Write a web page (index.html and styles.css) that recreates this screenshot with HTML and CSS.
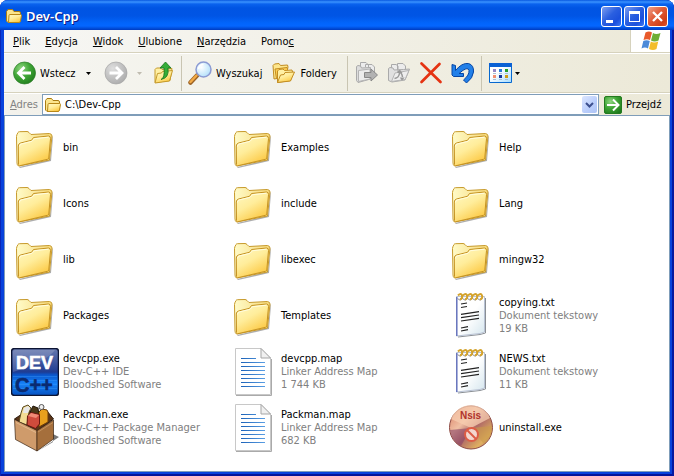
FILE: index.html
```html
<!DOCTYPE html>
<html lang="pl">
<head>
<meta charset="utf-8">
<title>Dev-Cpp</title>
<link rel="stylesheet" href="styles.css">
</head>
<body>
<svg class="defs" aria-hidden="true">
  <defs>
    <linearGradient id="gFolder" x1="0" y1="0" x2=".6" y2="1"><stop offset="0" stop-color="#fff9c4"/><stop offset=".5" stop-color="#ffed9b"/><stop offset="1" stop-color="#fcc944"/></linearGradient>
    <linearGradient id="gBack" x1="0" y1="0" x2="1" y2="0"><stop offset="0" stop-color="#fffbc8"/><stop offset="1" stop-color="#f6d878"/></linearGradient>
    <radialGradient id="gGreen" cx=".35" cy=".3" r=".8"><stop offset="0" stop-color="#8fd680"/><stop offset=".5" stop-color="#3ea535"/><stop offset="1" stop-color="#1f7a1c"/></radialGradient>
    <radialGradient id="gGray" cx=".35" cy=".3" r=".8"><stop offset="0" stop-color="#dedede"/><stop offset="1" stop-color="#a9a9a9"/></radialGradient>
    <linearGradient id="gDev" x1="0" y1="0" x2="0" y2="1"><stop offset="0" stop-color="#6678ae"/><stop offset=".5" stop-color="#1f3c92"/><stop offset=".56" stop-color="#0a56cc"/><stop offset=".75" stop-color="#1682f8"/><stop offset="1" stop-color="#0651c0"/></linearGradient>
    <linearGradient id="gLine"><stop offset="0" stop-color="#1c62b8"/><stop offset="1" stop-color="#5b9fe4"/></linearGradient>
    <linearGradient id="gPaper" x1="0" y1="0" x2="1" y2="1"><stop offset=".5" stop-color="#fff"/><stop offset="1" stop-color="#d5e6ee"/></linearGradient>
    <linearGradient id="gDisc" x1="0" y1="0" x2="1" y2="1"><stop offset="0" stop-color="#d9795f"/><stop offset=".35" stop-color="#f0c0a4"/><stop offset=".55" stop-color="#b06a66"/><stop offset=".8" stop-color="#e0b060"/><stop offset="1" stop-color="#9d5c78"/></linearGradient>
    <radialGradient id="gLens" cx=".35" cy=".35" r=".8"><stop offset="0" stop-color="#fff"/><stop offset="1" stop-color="#a8dcfa"/></radialGradient>
    <linearGradient id="gView" x1="0" y1="0" x2="1" y2="1"><stop offset=".4" stop-color="#fff"/><stop offset="1" stop-color="#a5dcff"/></linearGradient>

    <symbol id="folder" viewBox="0 0 48 48">
      <path d="M8 43 L39 35.500 L41.500 12 L42 13 L40 37 L9 44Z" fill="#777" opacity=".6"/>
      <path d="M5.500 12.500 Q5.500 11 7 8.500 Q7.500 7.700 8.500 7.700 L16 7.500 Q17 7.500 18 8.500 L20 10.500 L38.500 9.500 Q41 10 41 12 L38.500 36 L7.500 42 Q6 41 6 39Z" fill="url(#gBack)" stroke="#c79a2c"/>
      <path d="M7.300 22 Q7.300 19.700 9.500 19 L20.500 16.300 L22.500 13.500 L37.500 12 Q39.500 12 39.500 14.500 L37.800 34 Q37.500 35 36.500 35.300 L8.500 41.800 Q7.500 42 7.500 40.500Z" fill="url(#gFolder)" stroke="#c59221"/>
      <path d="M8.500 22.500 Q8.500 20.500 10 20 L21 17.300 L23.500 14.700 L37.500 13.200" fill="none" stroke="#fffde0"/>
    </symbol>
    <symbol id="folder-small" viewBox="0 0 16 16">
      <path d="M.5 13 V3.500 L2 1.500 H6.500 L8 3.500 H13 Q14.500 3.500 14.500 5 V12 L13 14.500 H2Z" fill="#fbe58e" stroke="#a97c12"/>
      <path d="M2.500 14.500 L3 7.500 Q3 6.500 4 6.500 H14.500 Q15.500 6.500 15.500 7.500 L14.500 13 Q14.200 14.500 13 14.500Z" fill="url(#gFolder)" stroke="#b88718"/>
    </symbol>
    <symbol id="map" viewBox="0 0 48 48">
      <path d="M7 47.500H42.500V11" fill="none" stroke="#aaa"/>
      <path d="M6.500 .5H32L41.500 10V46.500H6.500Z" fill="#fff" stroke="#c8c8c8"/>
      <path d="M32 .5V10H41.500Z" fill="#f0f0f0" stroke="#a5a5a5"/>
      <path d="M12 10h15v1H12zM12 14h24v1H12zM12 18h24v1H12zM12 22h24v1H12zM12 26h24v1H12zM12 30h24v1H12zM12 34h24v1H12zM12 38h24v1H12z" fill="url(#gLine)"/>
    </symbol>
    <symbol id="txt" viewBox="0 0 48 48">
      <path d="M11 45 L33 42.500 L38.500 41 V6" fill="none" stroke="#8a8f94"/>
      <path d="M9.500 4.500 H37.500 V40 L33 41.500 L9.500 44Z" fill="url(#gPaper)" stroke="#b8c2d4"/>
      <path d="M9.800 5 V44" stroke="#6674bd" stroke-width="1.500"/>
      <path d="M14 12l6-1M14 15.500l6-1M14 22.300l18-2.600M14 25.700l18-2.700M14 29l18-2.700M14 36l7-1.300M14 39l7-1.300" stroke="#222" stroke-width="1.200"/>
      <path d="M11 3.500q3-3 4 0t-2 4M16 3.500q3-3 4 0t-2 4M21 3.500q3-3 4 0t-2 4M26 3.500q3-3 4 0t-2 4M31 3.500q3-3 4 0t-2 4" fill="none" stroke="#d3a22c" stroke-width="2"/>
      <path d="M11 6.500l2 2M16 6.500l2 2M21 6.500l2 2M26 6.500l2 2M31 6.500l2 2" stroke="#666"/>
    </symbol>
  </defs>
</svg>

<main class="window">
  <header class="titlebar">
    <svg class="i16" viewBox="0 0 16 16"><use href="#folder-small"/></svg>
    <h1>Dev-Cpp</h1>
    <div class="controls">
      <button class="ctl" aria-label="Minimalizuj"><svg viewBox="0 0 19 19"><path d="M4 13h7v3H4z" fill="#fff"/></svg></button>
      <button class="ctl" aria-label="Maksymalizuj"><svg viewBox="0 0 19 19"><path d="M4 4h11v11H4zM5 7v7h9V7z" fill="#fff" fill-rule="evenodd"/></svg></button>
      <button class="ctl close" aria-label="Zamknij"><svg viewBox="0 0 19 19"><path d="M5 5l9 9M14 5l-9 9" stroke="#fff" stroke-width="2.300"/></svg></button>
    </div>
  </header>

  <div class="menurow">
    <nav class="menu">
      <button><u>P</u>lik</button><button><u>E</u>dycja</button><button><u>W</u>idok</button><button><u>U</u>lubione</button><button><u>N</u>arzędzia</button><button>Pomo<u>c</u></button>
    </nav>
    <div class="flag">
      <svg viewBox="0 0 20 20">
        <path d="M4.500 1.500 Q8-.5 11 1.500 L9 9 Q6 7.500 2.500 9Z" fill="#e8592b"/>
        <path d="M12 2 Q15 4 19.500 2 L17.500 9.500 Q13.500 11.500 10 9.500Z" fill="#6fae34"/>
        <path d="M2.300 10 Q5.500 8.500 8.800 10 L7 17.500 Q4 15.500 .5 17.500Z" fill="#4c8ad8"/>
        <path d="M9.800 10.500 Q13 12.500 17.200 10.500 L15.500 18 Q12 20 8 18Z" fill="#f3bd2b"/>
      </svg>
    </div>
  </div>

  <div class="toolbar">
    <button class="tool back"><svg class="i24" viewBox="0 0 24 24"><circle cx="12.500" cy="12" r="11" fill="url(#gGreen)" stroke="#2d7d28" stroke-width=".7"/><path d="M19 12H7.500M12.500 6l-6 6 6 6" fill="none" stroke="#fff" stroke-width="2.800"/></svg>Wstecz</button>
    <button class="drop" aria-label="Historia wstecz"><svg viewBox="0 0 5 3"><path d="M0 0h5L2.500 3z"/></svg></button>
    <button class="tool fwd" aria-label="Dalej"><svg class="i24" viewBox="0 0 24 24"><circle cx="12" cy="12" r="11" fill="url(#gGray)" stroke="#a5a5a5" stroke-width=".7"/><path d="M5.500 12H17M12 6l6 6-6 6" fill="none" stroke="#fff" stroke-width="2.800"/></svg></button>
    <button class="drop off" aria-label="Historia dalej"><svg viewBox="0 0 5 3"><path d="M0 0h5L2.500 3z"/></svg></button>
    <button class="tool up" aria-label="Do góry"><svg class="i24" viewBox="0 0 24 24">
      <path d="M3 21.500 V8.500 L4.500 7 H8.500 L10 8.500 L20 7.500 L18 19.500Z" fill="#fff0a4" stroke="#c59a2c"/>
      <path d="M3 22 L5.500 12.500 L9.500 12 L10.500 10.500 L20.500 9.500 L17.500 20Z" fill="url(#gFolder)" stroke="#c59a2c"/>
      <path d="M9 18.500 Q13 17 12 7 H8 L13.500 1 L19 7 H16 Q17.500 17 9 18.500Z" fill="#35ad38" stroke="#16721c" stroke-width=".8"/></svg></button>
    <span class="sep"></span>
    <button class="tool search"><svg class="i24" viewBox="0 0 24 24"><path d="M9 14.500L2.500 21.500" stroke="#9b6224" stroke-width="4.500" stroke-linecap="round"/><path d="M8.500 14.500L2.500 21" stroke="#f3aa45" stroke-width="2.500" stroke-linecap="round"/><circle cx="15.500" cy="8.500" r="7.500" fill="url(#gLens)" stroke="#8c9bd3" stroke-width="1.500"/><path d="M10.500 8a5 5 0 0 1 5-4.500" fill="none" stroke="#fff" stroke-width="1.500"/></svg>Wyszukaj</button>
    <button class="tool folders"><svg class="i24" viewBox="0 0 24 24">
      <path d="M2 18 L1 4.500 L2.500 3 L7 2.500 L8.500 4.500 L15.500 4 L16 6 L14 16Z" fill="#fde68c" stroke="#c28d22"/>
      <path d="M4.500 18 L3 8 L15 6.500 L15.500 8" fill="#ffcf55" stroke="#c28d22"/>
      <path d="M5.500 21.500 V10 L7 8.500 L11 8 L12.500 9.500 L20 9 L20.500 11 L18.500 19.500Z" fill="#fff0a4" stroke="#c28d22"/>
      <path d="M5.500 21.500 L8.500 14 L12 13.500 L13 11.500 L22.500 11 L18.500 20Z" fill="url(#gFolder)" stroke="#c28d22"/></svg>Foldery</button>
    <span class="sep"></span>
    <button class="tool sq" aria-label="Przenieś do"><svg class="i24" viewBox="0 0 24 24"><path d="M5.500 9V1.500H11L13.500 4V9M10.500 6V3.500H17L19.500 6V16H10.500" fill="#ececec" stroke="#aaa"/><path d="M1.500 19.500V5.500L3 4.500 5.500 5 6.500 7 15.500 6.500V18L3 21.500Z" fill="#ddd" stroke="#aaa"/><path d="M3.500 20.500V9.500L15 8V18Z" fill="#ececec" stroke="#b4b4b4"/><path d="M9.500 11.500H16V8L22.500 14 16 20V16.500H9.500Z" fill="#b2b2b2" stroke="#888"/></svg></button>
    <button class="tool sq" aria-label="Kopiuj do"><svg class="i24" viewBox="0 0 24 24"><path d="M4.500 9V3.500H9L11 5V10M10.500 14V2.500H16L18.500 5V14Z" fill="#ececec" stroke="#aaa"/><path d="M1.500 19.500V7.500L3 6.500 6 7 7 9 16.500 8.500 22.500 8 18 19 5 21Z" fill="#e0e0e0" stroke="#aaa"/><path d="M4.500 20.500L8 12L22 9.500L18 18.500Z" fill="#eee" stroke="#b4b4b4"/><path d="M7.500 17.500Q12 17 12.500 12M10.500 10Q15 11 15.500 16" fill="none" stroke="#999" stroke-width="1.500"/><path d="M10 12l2.800-3.500 2.700 3.500zM12.700 16.500h5l-2.700 3z" fill="#999"/></svg></button>
    <button class="tool sq" aria-label="Usuń"><svg class="i24" viewBox="0 0 24 24"><path d="M2.500 2.500L21.500 21M20.500 3L2.500 21" stroke="#e53312" stroke-width="2.700" stroke-linecap="round"/></svg></button>
    <button class="tool sq" aria-label="Cofnij"><svg class="i24" viewBox="0 0 24 24"><path d="M1 3.500L4.500 4.500V9.500Q11 1.500 17.500 2.500Q23 4 22.500 11Q22 17 15.500 22L12.500 19Q18.500 14 18 9.500Q17 4.500 8 12.500H12.500V15.500H2.500L1 14Z" fill="#2280e9" stroke="#0646a5"/></svg></button>
    <span class="sep"></span>
    <button class="tool views" aria-label="Widoki"><svg class="i24" viewBox="0 0 24 24"><path d="M.5 2.500h22v19H.5z" fill="url(#gView)" stroke="#0768cf"/><path d="M0 2h23v4H0z" fill="#0a61d4"/><path d="M4 8h3v3H4z" fill="#9487c5"/><path d="M10 8h3v3h-3z" fill="#297bd9"/><path d="M16 8h3v3h-3z" fill="#24a12b"/><path d="M4 14h3v3H4z" fill="#f19172"/><path d="M10 14h3v3h-3z" fill="#17389c"/><path d="M16 14h3v3h-3z" fill="#d09c13"/><path d="M4 12h3v1H4zM10 12h3v1h-3zM16 12h3v1h-3zM4 18h3v1H4zM10 18h3v1h-3zM16 18h3v1h-3z" fill="#a6bfd4"/></svg><svg class="arr" viewBox="0 0 5 3"><path d="M0 0h5L2.500 3z"/></svg></button>
  </div>

  <div class="address">
    <label for="addr"><u>A</u>dres</label>
    <div class="combo">
      <svg class="i16" viewBox="0 0 16 16"><use href="#folder-small"/></svg>
      <input id="addr" type="text" value="C:\Dev-Cpp">
      <button class="pick" aria-label="Lista adresów"><svg viewBox="0 0 9 6"><path d="M1 1l3.500 3.500L8 1" fill="none" stroke="#3c4f8e" stroke-width="2"/></svg></button>
    </div>
    <button class="go"><svg viewBox="0 0 18 18"><rect x=".5" y=".5" width="17" height="17" rx="1.500" fill="url(#gGreen)" stroke="#237b20"/><path d="M3 9h11M9 3.500L14.500 9 9 14.500" fill="none" stroke="#fff" stroke-width="2"/></svg>Przejdź</button>
  </div>

  <ul class="files">
    <li><svg class="i48"><use href="#folder"/></svg><p>bin</p></li>
    <li><svg class="i48"><use href="#folder"/></svg><p>Examples</p></li>
    <li><svg class="i48"><use href="#folder"/></svg><p>Help</p></li>
    <li><svg class="i48"><use href="#folder"/></svg><p>Icons</p></li>
    <li><svg class="i48"><use href="#folder"/></svg><p>include</p></li>
    <li><svg class="i48"><use href="#folder"/></svg><p>Lang</p></li>
    <li><svg class="i48"><use href="#folder"/></svg><p>lib</p></li>
    <li><svg class="i48"><use href="#folder"/></svg><p>libexec</p></li>
    <li><svg class="i48"><use href="#folder"/></svg><p>mingw32</p></li>
    <li><svg class="i48"><use href="#folder"/></svg><p>Packages</p></li>
    <li><svg class="i48"><use href="#folder"/></svg><p>Templates</p></li>
    <li><svg class="i48"><use href="#txt"/></svg><p>copying.txt<small>Dokument tekstowy</small><small>19 KB</small></p></li>
    <li><svg class="i48" viewBox="0 0 48 48"><rect x=".5" y=".5" width="47" height="47" rx="3" fill="url(#gDev)" stroke="#0c1433" stroke-width="1.500"/><path d="M2 24V4Q2 2 4 2H44Q35 14 2 24Z" fill="#fff" opacity=".16"/><path d="M2 28.500h44M2 32.500h44M2 36.500h44M2 40.500h44" stroke="#43a5ff" opacity=".35"/><text class="dev" x="5" y="21" fill="#fff" stroke="#fff" stroke-width=".6">DEV</text><text class="cpp" x="4" y="44" fill="#0a2a70" stroke="#0a2a70" stroke-width=".6">C++</text></svg><p>devcpp.exe<small>Dev-C++ IDE</small><small>Bloodshed Software</small></p></li>
    <li><svg class="i48"><use href="#map"/></svg><p>devcpp.map<small>Linker Address Map</small><small>1 744 KB</small></p></li>
    <li><svg class="i48"><use href="#txt"/></svg><p>NEWS.txt<small>Dokument tekstowy</small><small>11 KB</small></p></li>
    <li><svg class="i48" viewBox="0 0 48 48">
      <path d="M27 47L48 33L42 30V38Z" fill="#777"/>
      <path d="M3.500 15L14 8L36 7L42.500 15L26 27Z" fill="#5a3418" stroke="#2b1a0c"/>
      <path d="M8 18L10 9L12 3L17 1L20 4L18 8L16 21Z" fill="#f3dc94" stroke="#5a4a20"/>
      <path d="M13 4L17 2L19 4L17 9L12 9Z" fill="#e8e8e8"/>
      <path d="M19 8L22 2L27 4L28 12Z" fill="#4a3818" stroke="#1e140a"/>
      <path d="M28 8L31 5L36 6L37 8V18L28 23Z" fill="#e8a01d" stroke="#6b3c08"/>
      <circle cx="30.500" cy="3" r="2.500" fill="#eee" stroke="#555"/>
      <path d="M16.500 12L20 8.500L28.500 10.500V20L24.500 24.500L16 21Z" fill="#cf4b3c" stroke="#6c1710"/><path d="M17 12L20 9L28 11L25 14Z" fill="#f08a76"/>
      <path d="M3.500 15.500L26 26.500V47L4.500 35.500Z" fill="#cf9b6b" stroke="#3a2412" stroke-width=".7"/>
      <path d="M26 26.500L42.500 16V35L26 47Z" fill="#a56f3c" stroke="#3a2412" stroke-width=".7"/>
      <path d="M5 18L25 28V29L5 19Z" fill="#e2b88c"/><path d="M27 28L42 18.500" stroke="#c4925f"/></svg><p>Packman.exe<small>Dev-C++ Package Manager</small><small>Bloodshed Software</small></p></li>
    <li><svg class="i48"><use href="#map"/></svg><p>Packman.map<small>Linker Address Map</small><small>682 KB</small></p></li>
    <li><svg class="i48" viewBox="0 0 48 48"><circle cx="24" cy="23.500" r="21.500" fill="url(#gDisc)" stroke="#8d4a44"/><path d="M24 24L4 15A21 21 0 0 1 43 14Z" fill="#f7cdb0" opacity=".75"/><path d="M24 24L3 26A21 21 0 0 0 14 42Z" fill="#8b4566" opacity=".6"/><path d="M24 24L45 22A21 21 0 0 1 37 40Z" fill="#c99a4b" opacity=".6"/><text class="nsis" x="13" y="15" fill="#b0342c">Nsis</text><circle cx="24.500" cy="30.500" r="6.500" fill="#f3d6ce" stroke="#dd5c45" stroke-width="2"/><path d="M20 26l9 9" stroke="#dd5c45" stroke-width="2"/></svg><p>uninstall.exe</p></li>
  </ul>
</main>
</body>
</html>
```
FILE: styles.css
```css
* { box-sizing: border-box; }

body {
  margin: 0;
  background: #fff;
  font: 11px/13px "DejaVu Sans Condensed", "Noto Sans", sans-serif;
  color: #000;
}

button {
  margin: 0;
  padding: 0;
  border: 0;
  background: none;
  font: inherit;
  color: inherit;
}

svg { display: block; flex: none; }
.defs { position: absolute; width: 0; height: 0; }
.i16 { width: 16px; height: 16px; }
.i24 { width: 24px; height: 24px; }
.i48 { width: 48px; height: 48px; }

.window {
  display: flex;
  flex-direction: column;
  min-height: 100vh;
  padding: 0 4px 4px;
  border-radius: 8px 8px 0 0;
  background: #0842dc;
  box-shadow: inset 1px 0 #0a26b8, inset -2px 0 #0519a0, inset 0 -2px #04149a;
}

.titlebar {
  display: flex;
  align-items: center;
  gap: 4px;
  height: 30px;
  margin: 0 -4px;
  padding: 2px 6px 0 6px;
  border-radius: 8px 8px 0 0;
  background: linear-gradient(#0858e0 0, #3a93ff 2px, #0a62ee 4px, #0054e3 8px, #0055e5 16px, #0265fb 23px, #0466ff 26px, #0046cf 29px, #003ac0 30px);
}

.titlebar h1 {
  flex: 1;
  margin: 0;
  font: 600 13px/16px "Noto Sans", sans-serif;
  color: #fff;
  text-shadow: 1px 1px #0a1883;
}

.controls { display: flex; gap: 2px; }

.ctl {
  width: 21px;
  height: 21px;
  border: 1px solid #fff;
  border-radius: 3px;
  background: linear-gradient(135deg, #7d9ef0, #2a5fe0 45%, #1b50dc 75%, #3d79f5);
}

.close { background: linear-gradient(135deg, #f0a088, #e05a36 45%, #cf3f16 80%, #e0552c); }

.menurow {
  display: flex;
  height: 23px;
  border-bottom: 1px solid #d6d2bd;
  background: linear-gradient(90deg, #f7f7f5, #ece9d8);
}

.menu {
  display: flex;
  flex: 1;
  align-items: center;
  gap: 15px;
  padding-left: 9px;
}

.flag {
  display: grid;
  place-items: center;
  width: 40px;
  border-left: 1px solid #d6d2bd;
  background: #fff;
}

.flag svg { width: 20px; height: 20px; }

.toolbar {
  display: flex;
  align-items: center;
  height: 40px;
  padding-left: 8px;
  border-top: 1px solid #fff;
  border-bottom: 1px solid #d6d2bd;
  background: linear-gradient(90deg, #f6f6f2, #ece9d8);
}

.tool { display: flex; align-items: center; gap: 4px; }
.back { width: 74px; }
.drop svg, .arr { width: 5px; height: 3px; }
.fwd { margin-left: 13px; }
.off { margin: 0 0 0 9px; fill: #c0bcb0; }
.up { margin: 0 5px 0 10px; }
.sep { width: 1px; height: 35px; background: #c9c5b2; }
.search { margin-left: 6px; }
.folders { margin: 0 10px; }
.sq { margin-left: 8px; }
.sep + .sq { margin-left: 7px; }
.sq + .sep { margin-left: 6px; }
.views { margin-left: 7px; gap: 2px; }

.address {
  display: flex;
  height: 22px;
  align-items: center;
  border-top: 1px solid #fff;
  background: linear-gradient(90deg, #f3f2ec, #ece9d8);
}

.address label { width: 38px; padding-left: 6px; color: #828282; }

.combo {
  display: flex;
  flex: 1;
  align-self: stretch;
  align-items: center;
  gap: 3px;
  padding: 1px 1px 1px 2px;
  border: 1px solid #7f9db9;
  background: #fff;
}

.combo input {
  flex: 1;
  min-width: 0;
  padding: 0 1px;
  border: 0;
  background: none;
  font: inherit;
  outline: 0;
}

.pick {
  display: grid;
  place-items: center;
  align-self: stretch;
  width: 15px;
  border-radius: 2px;
  background: linear-gradient(135deg, #dce6ff, #b9cdfb 60%, #aec4f5);
}

.pick svg { width: 9px; height: 6px; }

.go { display: flex; align-items: center; gap: 4px; width: 71px; padding-left: 5px; }
.go svg { width: 18px; height: 18px; }

.files {
  display: grid;
  flex: 1;
  grid-template-columns: repeat(auto-fill, 218px);
  align-content: start;
  gap: 8px 0;
  margin: 0;
  padding: 8px 0 8px 6px;
  border: 1px solid #7f9db9;
  background: #fff;
  list-style: none;
}

.files li { display: flex; align-items: center; gap: 4px; height: 48px; }
.files p { margin: 0; padding-bottom: 1px; }
.files small { display: block; font-size: 11px; color: #808080; }

.dev { font: 700 18px "Liberation Sans", sans-serif; }
.cpp { font: 700 20px "Liberation Sans", sans-serif; }
.nsis { font: 700 10px "Liberation Sans", sans-serif; }
```
